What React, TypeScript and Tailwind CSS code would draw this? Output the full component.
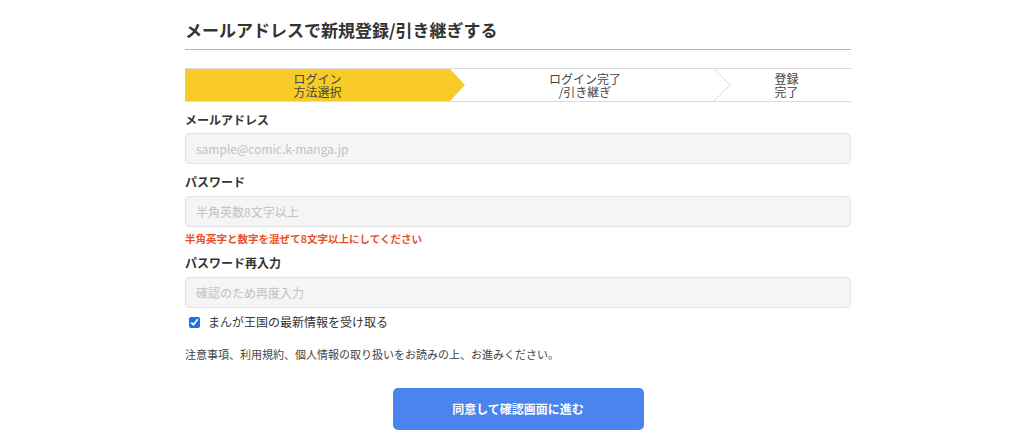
import type { ReactNode } from 'react'

const font = { fontFamily: '"Noto Sans CJK JP", "Noto Sans", sans-serif' }

function Label({ children }: { children: ReactNode }) {
    return <div className="text-[12px] leading-[18px] font-bold text-[#333]">{children}</div>
}

function Field({ placeholder }: { placeholder: string }) {
    return (
        <input
            type="text"
            placeholder={placeholder}
            className="w-full h-[31px] bg-[#f5f5f5] border border-[#e3e3e3] rounded-[4px] px-[10px] text-[12px] text-[#333] placeholder-[#c2c2c2] focus:outline-none"
        />
    )
}

function Steps() {
    return (
        <div className="flex h-[34px] border-y border-[#dcdcdc] text-[12px] leading-[13px] text-[#444]">
            {/* step 1 (current) */}
            <div className="relative w-[265px] bg-[#f9cb29] flex items-center justify-center text-center">
                <p>ログイン<br />方法選択</p>
                <svg className="absolute left-full top-0 z-10" width="15" height="32" viewBox="0 0 15 32">
                    <polygon points="0,0 15,16 0,32" fill="#f9cb29" />
                </svg>
            </div>
            {/* step 2 */}
            <div className="relative w-[264px] flex items-center justify-center text-center pl-[6px]">
                <p>ログイン完了<br />/引き継ぎ</p>
                <svg className="absolute left-full top-0 z-10" width="17" height="32" viewBox="0 0 17 32">
                    <polyline points="0,0 16,16 0,32" fill="#fff" stroke="#dcdcdc" strokeWidth="1" />
                </svg>
            </div>
            {/* step 3 */}
            <div className="flex-1 flex items-center justify-center text-center pl-[8px]">
                <p>登録<br />完了</p>
            </div>
        </div>
    )
}

export default function App() {
    return (
        <div className="w-full min-h-[442px] bg-white" style={font}>
            <div className="ml-[185px] w-[666px] pt-[18px]">
                <h1 className="text-[17px] leading-[24px] font-bold text-[#333] pb-[7px] border-b border-[#b5b5b5]">
                    メールアドレスで新規登録/引き継ぎする
                </h1>

                <div className="mt-[18px]">
                    <Steps />
                </div>

                <div className="mt-[9px]">
                    <Label>メールアドレス</Label>
                    <div className="mt-[4px]">
                        <Field placeholder="sample@comic.k-manga.jp" />
                    </div>
                </div>

                <div className="mt-[9px]">
                    <Label>パスワード</Label>
                    <div className="mt-[5px]">
                        <Field placeholder="半角英数8文字以上" />
                    </div>
                    <p className="mt-[4px] text-[10.5px] leading-[16px] font-bold text-[#e8502a]">
                        半角英字と数字を混ぜて8文字以上にしてください
                    </p>
                </div>

                <div className="mt-[7px]">
                    <Label>パスワード再入力</Label>
                    <div className="mt-[5px]">
                        <Field placeholder="確認のため再度入力" />
                    </div>
                </div>

                <label className="mt-[5px] flex items-center gap-[8px] pl-[4px] text-[12px] leading-[18px] text-[#333]">
                    <input type="checkbox" defaultChecked className="w-[11px] h-[11px] accent-[#1a73e8] m-0" />
                    まんが王国の最新情報を受け取る
                </label>

                <p className="mt-[15px] text-[11px] leading-[16px] text-[#444]">
                    注意事項、利用規約、個人情報の取り扱いをお読みの上、お進みください。
                </p>

                <div className="mt-[26px] flex justify-center">
                    <button
                        type="button"
                        className="w-[251px] h-[42px] rounded-[5px] bg-[#4a84ec] text-white text-[12px] font-bold"
                    >
                        同意して確認画面に進む
                    </button>
                </div>
            </div>
        </div>
    )
}
